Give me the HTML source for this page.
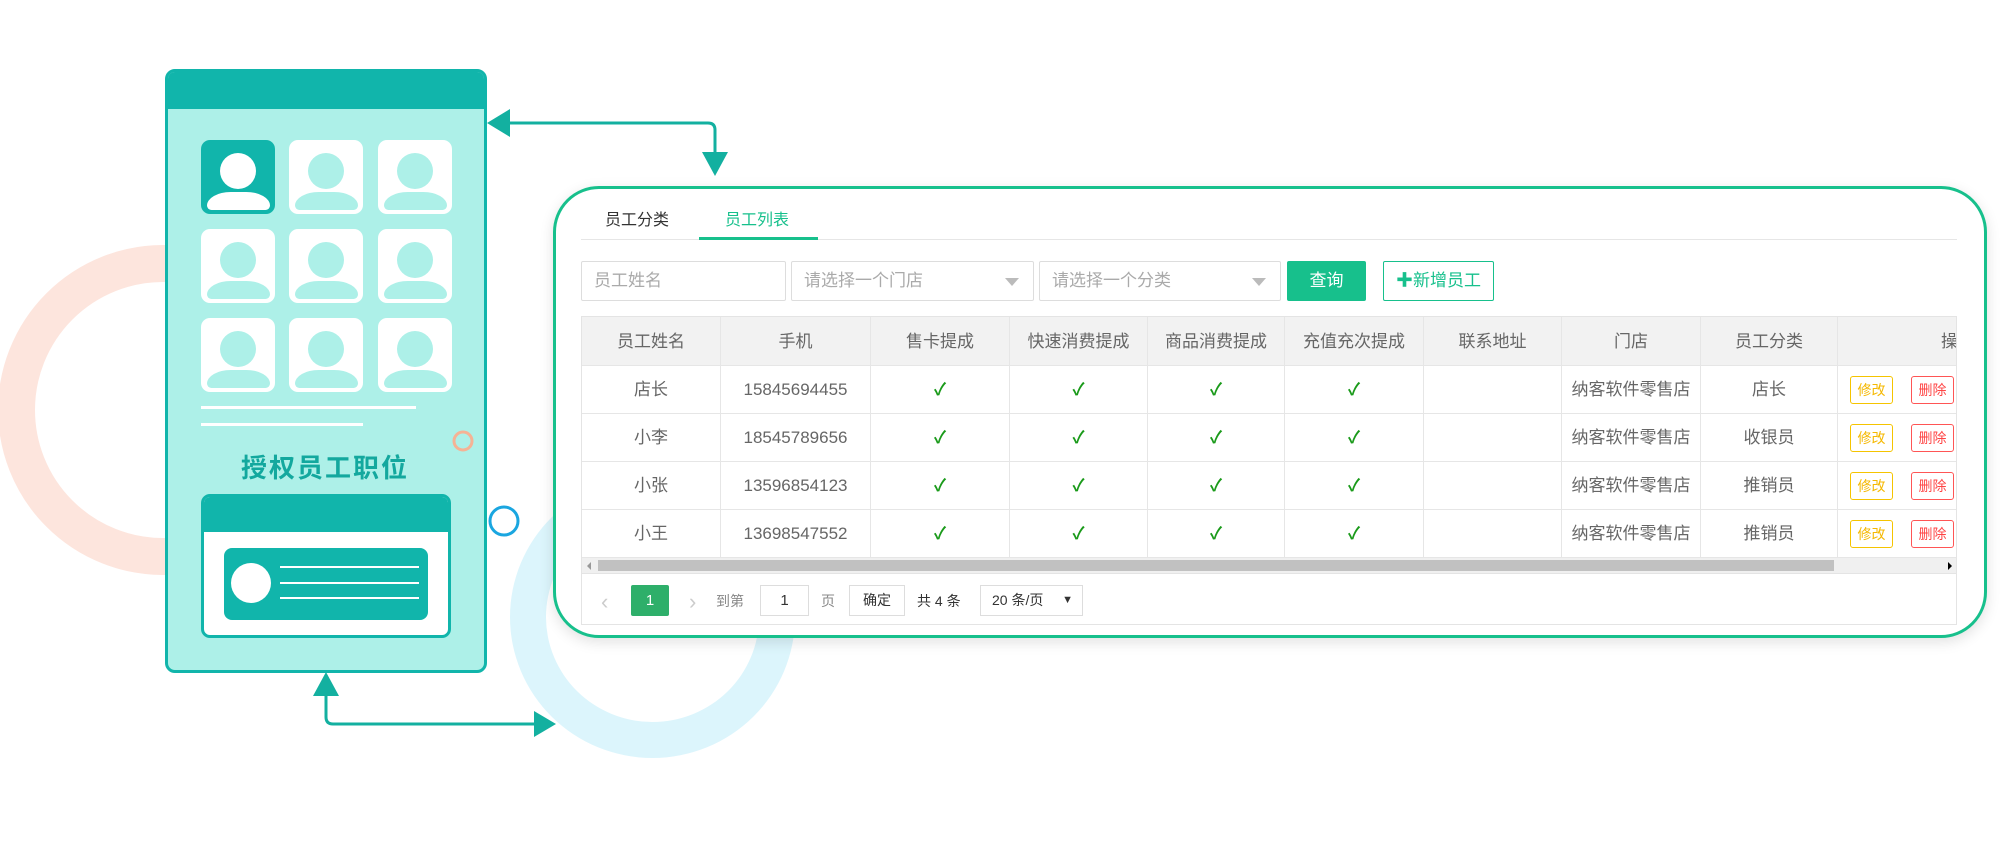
<!DOCTYPE html>
<html><head><meta charset="utf-8"><style>
*{margin:0;padding:0;box-sizing:border-box}
body{width:2016px;height:850px;background:#fff;position:relative;overflow:hidden;font-family:"Liberation Sans","Noto Sans CJK SC",sans-serif}
.a{position:absolute}
.av{position:absolute;width:74px;height:74px;border-radius:9px;background:#fff;overflow:hidden}
.av .h{position:absolute;left:19px;top:13px;width:36px;height:36px;border-radius:50%;background:#adf0e8}
.av .b{position:absolute;left:6px;top:52px;width:63px;height:18px;border-radius:50% 50% 6px 6px/100% 100% 6px 6px;background:#adf0e8}
.av.s{background:#11b5ab}.av.s .h,.av.s .b{background:#fff}
.card{left:553px;top:186px;width:1434px;height:452px;border:3px solid #17c08c;border-radius:46px;background:#fff;box-shadow:0 4px 14px rgba(0,0,0,.12)}
.inp{position:absolute;top:261px;height:40px;border:1px solid #ddd;border-radius:2px;color:#aaa;font-size:17px;line-height:38px;padding-left:12px}
.tri{position:absolute;right:14px;top:16px;width:0;height:0;border-left:7px solid transparent;border-right:7px solid transparent;border-top:8px solid #bbb}
.tbl{position:absolute;left:581px;top:316px;width:1376px;height:309px;border:1px solid #e4e4e4;overflow:hidden;font-size:17px;color:#666}
.row{display:flex;height:48px;border-bottom:1px solid #e6e6e6}
.row.hd{height:49px;background:#f2f2f2}
.row div{flex:none;border-right:1px solid #e6e6e6;display:flex;align-items:center;justify-content:center;white-space:nowrap;line-height:1}
.ck{color:#1a9a1a;font-size:17px;font-weight:bold}
.bt{display:inline-block;width:43px;height:28px;border:1px solid;border-radius:3px;font-size:14px;line-height:26px;text-align:center;margin:0 9px}
</style></head><body>
<!-- rings -->
<div class="a" style="left:-2px;top:245px;width:330px;height:330px;border-radius:50%;border:37px solid #fde5dd"></div>
<div class="a" style="left:510px;top:476px;width:285px;height:282px;border-radius:50%;border:36px solid #dcf5fc"></div>
<!-- arrows -->
<svg class="a" style="left:0;top:0" width="2016" height="850">
<path d="M510 123 H708 Q715 123 715 130 V155" fill="none" stroke="#13b0a0" stroke-width="3"/>
<polygon points="487,123 510,109 510,137" fill="#13b0a0"/>
<polygon points="715,176 702,152 728,152" fill="#13b0a0"/>
<path d="M326 694 V717 Q326 724 333 724 H536" fill="none" stroke="#13b0a0" stroke-width="3"/>
<polygon points="326,672 313,696 339,696" fill="#13b0a0"/>
<polygon points="556,724 534,711 534,737" fill="#13b0a0"/>
<circle cx="504" cy="521" r="14" fill="none" stroke="#1aa6e0" stroke-width="3"/>
</svg>
<!-- phone -->
<div class="a" style="left:165px;top:69px;width:322px;height:604px;border:3px solid #11b5ab;border-radius:10px;background:#adf0e8;overflow:hidden">
<div style="height:37px;background:#11b5ab"></div></div>
<div class="av s" style="left:201px;top:140px"><div class="h"></div><div class="b"></div></div>
<div class="av" style="left:289px;top:140px"><div class="h"></div><div class="b"></div></div>
<div class="av" style="left:378px;top:140px"><div class="h"></div><div class="b"></div></div>
<div class="av" style="left:201px;top:229px"><div class="h"></div><div class="b"></div></div>
<div class="av" style="left:289px;top:229px"><div class="h"></div><div class="b"></div></div>
<div class="av" style="left:378px;top:229px"><div class="h"></div><div class="b"></div></div>
<div class="av" style="left:201px;top:318px"><div class="h"></div><div class="b"></div></div>
<div class="av" style="left:289px;top:318px"><div class="h"></div><div class="b"></div></div>
<div class="av" style="left:378px;top:318px"><div class="h"></div><div class="b"></div></div>
<div class="a" style="left:201px;top:406px;width:215px;height:3px;background:#fff"></div>
<div class="a" style="left:201px;top:423px;width:162px;height:3px;background:#fff"></div>
<div class="a" style="left:200px;top:448px;width:250px;text-align:center;font-size:26px;font-weight:bold;color:#13a89e;letter-spacing:2px">授权员工职位</div>
<svg class="a" style="left:450px;top:428px" width="26" height="26"><circle cx="13" cy="13" r="9" fill="none" stroke="#f5b395" stroke-width="3"/></svg>
<div class="a" style="left:201px;top:494px;width:250px;height:144px;border:3px solid #11b5ab;border-radius:9px;background:#fff;overflow:hidden"><div style="height:35px;background:#11b5ab"></div></div>
<div class="a" style="left:224px;top:548px;width:204px;height:72px;border-radius:8px;background:#11b5ab"></div>
<div class="a" style="left:231px;top:563px;width:40px;height:40px;border-radius:50%;background:#fff"></div>
<div class="a" style="left:280px;top:566px;width:139px;height:2px;background:#fff"></div>
<div class="a" style="left:280px;top:582px;width:139px;height:2px;background:#fff"></div>
<div class="a" style="left:280px;top:597px;width:139px;height:2px;background:#fff"></div>
<!-- card -->
<div class="a card"></div>
<div class="a" style="left:581px;top:239px;width:1376px;height:1px;background:#e6e6e6"></div>
<div class="a" style="left:605px;top:206px;font-size:16px;color:#333">员工分类</div>
<div class="a" style="left:725px;top:206px;font-size:16px;color:#17c08c">员工列表</div>
<div class="a" style="left:699px;top:237px;width:119px;height:3px;background:#17c08c"></div>
<div class="inp" style="left:581px;width:205px">员工姓名</div>
<div class="inp" style="left:791px;width:243px">请选择一个门店<span class="tri"></span></div>
<div class="inp" style="left:1039px;width:242px">请选择一个分类<span class="tri"></span></div>
<div class="a" style="left:1287px;top:261px;width:79px;height:40px;background:#17c08c;border-radius:2px;color:#fff;font-size:17px;line-height:40px;text-align:center">查询</div>
<div class="a" style="left:1383px;top:261px;width:111px;height:40px;border:1px solid #17c08c;border-radius:2px;color:#17c08c;font-size:17px;line-height:38px;text-align:center"><b>✚</b>新增员工</div>
<div class="tbl">
<div class="row hd"><div style="width:139px">员工姓名</div><div style="width:150px">手机</div><div style="width:139px">售卡提成</div><div style="width:138px">快速消费提成</div><div style="width:137px">商品消费提成</div><div style="width:139px">充值充次提成</div><div style="width:138px">联系地址</div><div style="width:139px">门店</div><div style="width:137px">员工分类</div><div style="width:240px;border:0">操作</div></div>
<div class="row"><div style="width:139px">店长</div><div style="width:150px">15845694455</div><div style="width:139px" class="ck">✓</div><div style="width:138px" class="ck">✓</div><div style="width:137px" class="ck">✓</div><div style="width:139px" class="ck">✓</div><div style="width:138px"></div><div style="width:139px">纳客软件零售店</div><div style="width:137px">店长</div><div style="width:240px;border:0;justify-content:flex-start;padding-left:3px"><span class="bt" style="color:#f5b800;border-color:#f5c400">修改</span><span class="bt" style="color:#f44;border-color:#f55">删除</span></div></div>
<div class="row"><div style="width:139px">小李</div><div style="width:150px">18545789656</div><div style="width:139px" class="ck">✓</div><div style="width:138px" class="ck">✓</div><div style="width:137px" class="ck">✓</div><div style="width:139px" class="ck">✓</div><div style="width:138px"></div><div style="width:139px">纳客软件零售店</div><div style="width:137px">收银员</div><div style="width:240px;border:0;justify-content:flex-start;padding-left:3px"><span class="bt" style="color:#f5b800;border-color:#f5c400">修改</span><span class="bt" style="color:#f44;border-color:#f55">删除</span></div></div>
<div class="row"><div style="width:139px">小张</div><div style="width:150px">13596854123</div><div style="width:139px" class="ck">✓</div><div style="width:138px" class="ck">✓</div><div style="width:137px" class="ck">✓</div><div style="width:139px" class="ck">✓</div><div style="width:138px"></div><div style="width:139px">纳客软件零售店</div><div style="width:137px">推销员</div><div style="width:240px;border:0;justify-content:flex-start;padding-left:3px"><span class="bt" style="color:#f5b800;border-color:#f5c400">修改</span><span class="bt" style="color:#f44;border-color:#f55">删除</span></div></div>
<div class="row"><div style="width:139px">小王</div><div style="width:150px">13698547552</div><div style="width:139px" class="ck">✓</div><div style="width:138px" class="ck">✓</div><div style="width:137px" class="ck">✓</div><div style="width:139px" class="ck">✓</div><div style="width:138px"></div><div style="width:139px">纳客软件零售店</div><div style="width:137px">推销员</div><div style="width:240px;border:0;justify-content:flex-start;padding-left:3px"><span class="bt" style="color:#f5b800;border-color:#f5c400">修改</span><span class="bt" style="color:#f44;border-color:#f55">删除</span></div></div>
<div style="position:relative;height:16px;background:#f0f0f0;border-bottom:1px solid #e4e4e4">
<div style="position:absolute;left:16px;top:2px;width:1236px;height:11px;background:#c1c1c1"></div>
<div style="position:absolute;left:5px;top:4px;border-top:4px solid transparent;border-bottom:4px solid transparent;border-right:4px solid #999"></div>
<div style="position:absolute;right:4px;top:4px;border-top:4px solid transparent;border-bottom:4px solid transparent;border-left:4px solid #000"></div>
</div>
</div>
<!-- pagination -->
<div class="a" style="left:601px;top:589px;font-size:22px;color:#ccc">‹</div>
<div class="a" style="left:631px;top:585px;width:38px;height:31px;background:#2eaf6a;color:#fff;font-size:15px;line-height:31px;text-align:center;border-radius:2px">1</div>
<div class="a" style="left:689px;top:589px;font-size:22px;color:#ccc">›</div>
<div class="a" style="left:716px;top:591px;font-size:14px;color:#888">到第</div>
<div class="a" style="left:760px;top:585px;width:49px;height:31px;border:1px solid #ddd;font-size:15px;line-height:29px;text-align:center;color:#333">1</div>
<div class="a" style="left:821px;top:591px;font-size:14px;color:#888">页</div>
<div class="a" style="left:849px;top:585px;width:56px;height:31px;border:1px solid #ddd;font-size:14px;line-height:29px;text-align:center;color:#333">确定</div>
<div class="a" style="left:917px;top:591px;font-size:14px;color:#333">共 4 条</div>
<div class="a" style="left:980px;top:585px;width:103px;height:31px;border:1px solid #ddd;font-size:14px;line-height:29px;padding-left:11px;color:#333">20 条/页<span style="position:absolute;right:9px;font-size:11px">▼</span></div>
</body></html>
